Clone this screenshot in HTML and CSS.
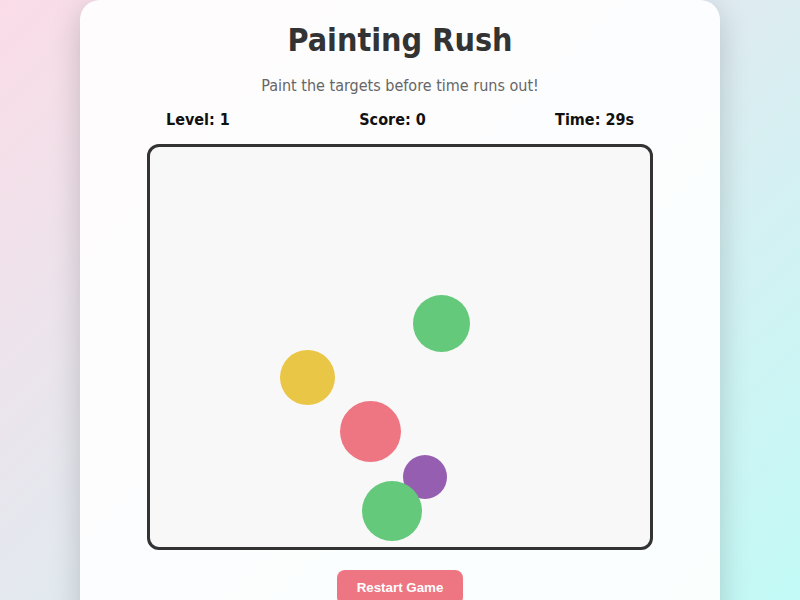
FILE: index.html
```html
<!DOCTYPE html>
<html lang="en">
<head>
<meta charset="utf-8">
<title>Painting Rush</title>
<link rel="stylesheet" href="styles.css">
</head>
<body>
<main class="card">
  <h1 class="title">Painting Rush</h1>
  <p class="subtitle">Paint the targets before time runs out!</p>
  <div class="stats">
    <span class="stat">Level: 1</span>
    <span class="stat">Score: 0</span>
    <span class="stat">Time: 29s</span>
  </div>
  <div class="board">
    <span class="target green" style="left:263px;top:148px;width:57px;height:57px"></span>
    <span class="target yellow" style="left:130px;top:203px;width:55px;height:55px"></span>
    <span class="target pink" style="left:190px;top:254px;width:61px;height:61px"></span>
    <span class="target purple" style="left:253px;top:308px;width:44px;height:44px"></span>
    <span class="target green" style="left:212px;top:334px;width:60px;height:60px"></span>
  </div>
  <button class="restart">Restart Game</button>
</main>
</body>
</html>
```

FILE: styles.css
```css
html, body {
  margin: 0;
  padding: 0;
  height: 100%;
}

body {
  background: linear-gradient(135deg, #fadce7 0%, #e0eaf0 50%, #c2faf6 100%);
  font-family: "DejaVu Sans Condensed", "DejaVu Sans", sans-serif;
  overflow: hidden;
}

.card {
  width: 640px;
  margin: 0 auto;
  box-sizing: border-box;
  padding: 22px 0 30px;
  background: rgba(255, 255, 255, 0.9);
  border-radius: 20px;
  box-shadow: 0 8px 30px rgba(0, 0, 0, 0.18);
  display: flex;
  flex-direction: column;
  align-items: center;
}

.title {
  margin: 0;
  font-size: 32px;
  font-weight: bold;
  color: #333;
  line-height: 37px;
}

.subtitle {
  margin: 17px 0 0;
  font-size: 16px;
  color: #666;
  line-height: 20px;
}

.stats {
  width: 468px;
  margin-top: 14px;
  display: flex;
  justify-content: space-between;
  font-size: 16px;
  font-weight: bold;
  color: #111;
  line-height: 20px;
}

.board {
  position: relative;
  margin-top: 14px;
  width: 500px;
  height: 400px;
  border: 3px solid #333;
  border-radius: 12px;
  background: #f8f8f8;
  overflow: hidden;
}

.target {
  position: absolute;
  border-radius: 50%;
}

.green { background: #64c97a; }
.yellow { background: #eac646; }
.pink { background: #ee7683; }
.purple { background: #955eb1; }

.restart {
  margin-top: 20px;
  padding: 10px 20px;
  border: none;
  border-radius: 8px;
  background: #ee7683;
  color: #fff;
  font-family: "Liberation Sans", Arial, sans-serif;
  font-size: 13.33px;
  font-weight: bold;
  cursor: pointer;
}
```
